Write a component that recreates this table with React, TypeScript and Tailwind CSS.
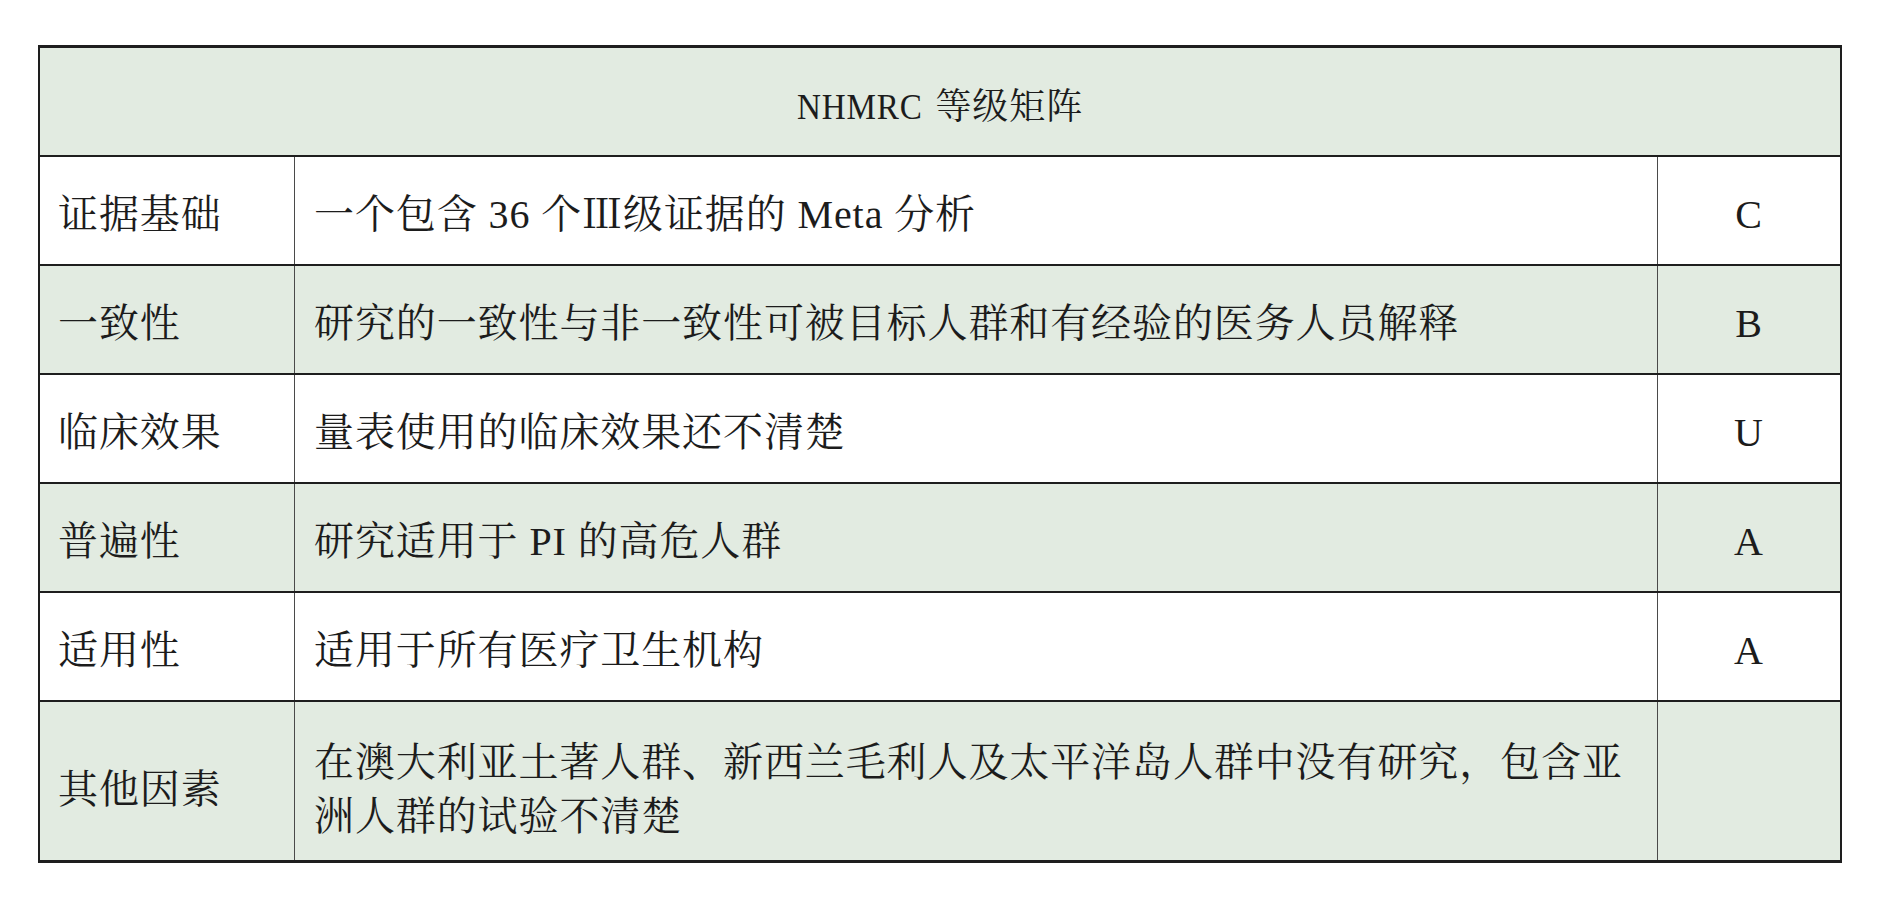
const rows: { label: string; body: React.ReactNode; grade: string; shaded: boolean }[] = [
  { label: "证据基础", body: "一个包含 36 个Ⅲ级证据的 Meta 分析", grade: "C", shaded: false },
  { label: "一致性", body: "研究的一致性与非一致性可被目标人群和有经验的医务人员解释", grade: "B", shaded: true },
  { label: "临床效果", body: "量表使用的临床效果还不清楚", grade: "U", shaded: false },
  { label: "普遍性", body: "研究适用于 PI 的高危人群", grade: "A", shaded: true },
  { label: "适用性", body: "适用于所有医疗卫生机构", grade: "A", shaded: false },
  {
    label: "其他因素",
    body: (
      <>
        在澳大利亚土著人群、新西兰毛利人及太平洋岛人群中没有研究，包含亚
        <br />
        洲人群的试验不清楚
      </>
    ),
    grade: "",
    shaded: true,
  },
];

function Row({
  label,
  body,
  grade,
  shaded,
  last,
}: {
  label: string;
  body: React.ReactNode;
  grade: string;
  shaded: boolean;
  last: boolean;
}) {
  const pad = last ? "pt-[18px]" : "pt-[8px]";
  return (
    <div
      className={`flex ${last ? "h-[158px]" : "h-[109px] border-b-2 border-[#1e1e1e]"} ${
        shaded ? "bg-[#e2ebe1]" : "bg-white"
      }`}
    >
      <div className={`flex w-[254px] shrink-0 items-center pl-[18px] ${pad}`}>{label}</div>
      <div
        className={`flex w-[1363px] shrink-0 items-center border-l border-[#4a4a4a] pl-[19px] leading-[54px] ${pad}`}
      >
        <div>{body}</div>
      </div>
      <div className={`flex flex-1 items-center justify-center border-l border-[#4a4a4a] ${pad}`}>{grade}</div>
    </div>
  );
}

export default function App() {
  return (
    <div className="h-[900px] w-[1888px] bg-white pl-[38px] pt-[45px]">
      <div
        className="w-[1804px] border-x-2 border-b-[3px] border-t-[3px] border-[#1e1e1e] text-[40px] tracking-[0.9px] text-[#1c1c1c]"
        style={{ fontFamily: '"Liberation Serif", "Noto Serif CJK SC", "Noto Sans CJK SC", serif' }}
      >
        <div className="flex h-[109px] items-center justify-center border-b-2 border-[#1e1e1e] bg-[#e2ebe1] pt-[10px] text-[36px]">
          <span className="mr-[-10px] inline-block origin-left scale-x-[0.92]">NHMRC</span>
          <span className="ml-[12px]">等级矩阵</span>
        </div>
        {rows.map((r, i) => (
          <Row key={i} {...r} last={i === rows.length - 1} />
        ))}
      </div>
    </div>
  );
}
